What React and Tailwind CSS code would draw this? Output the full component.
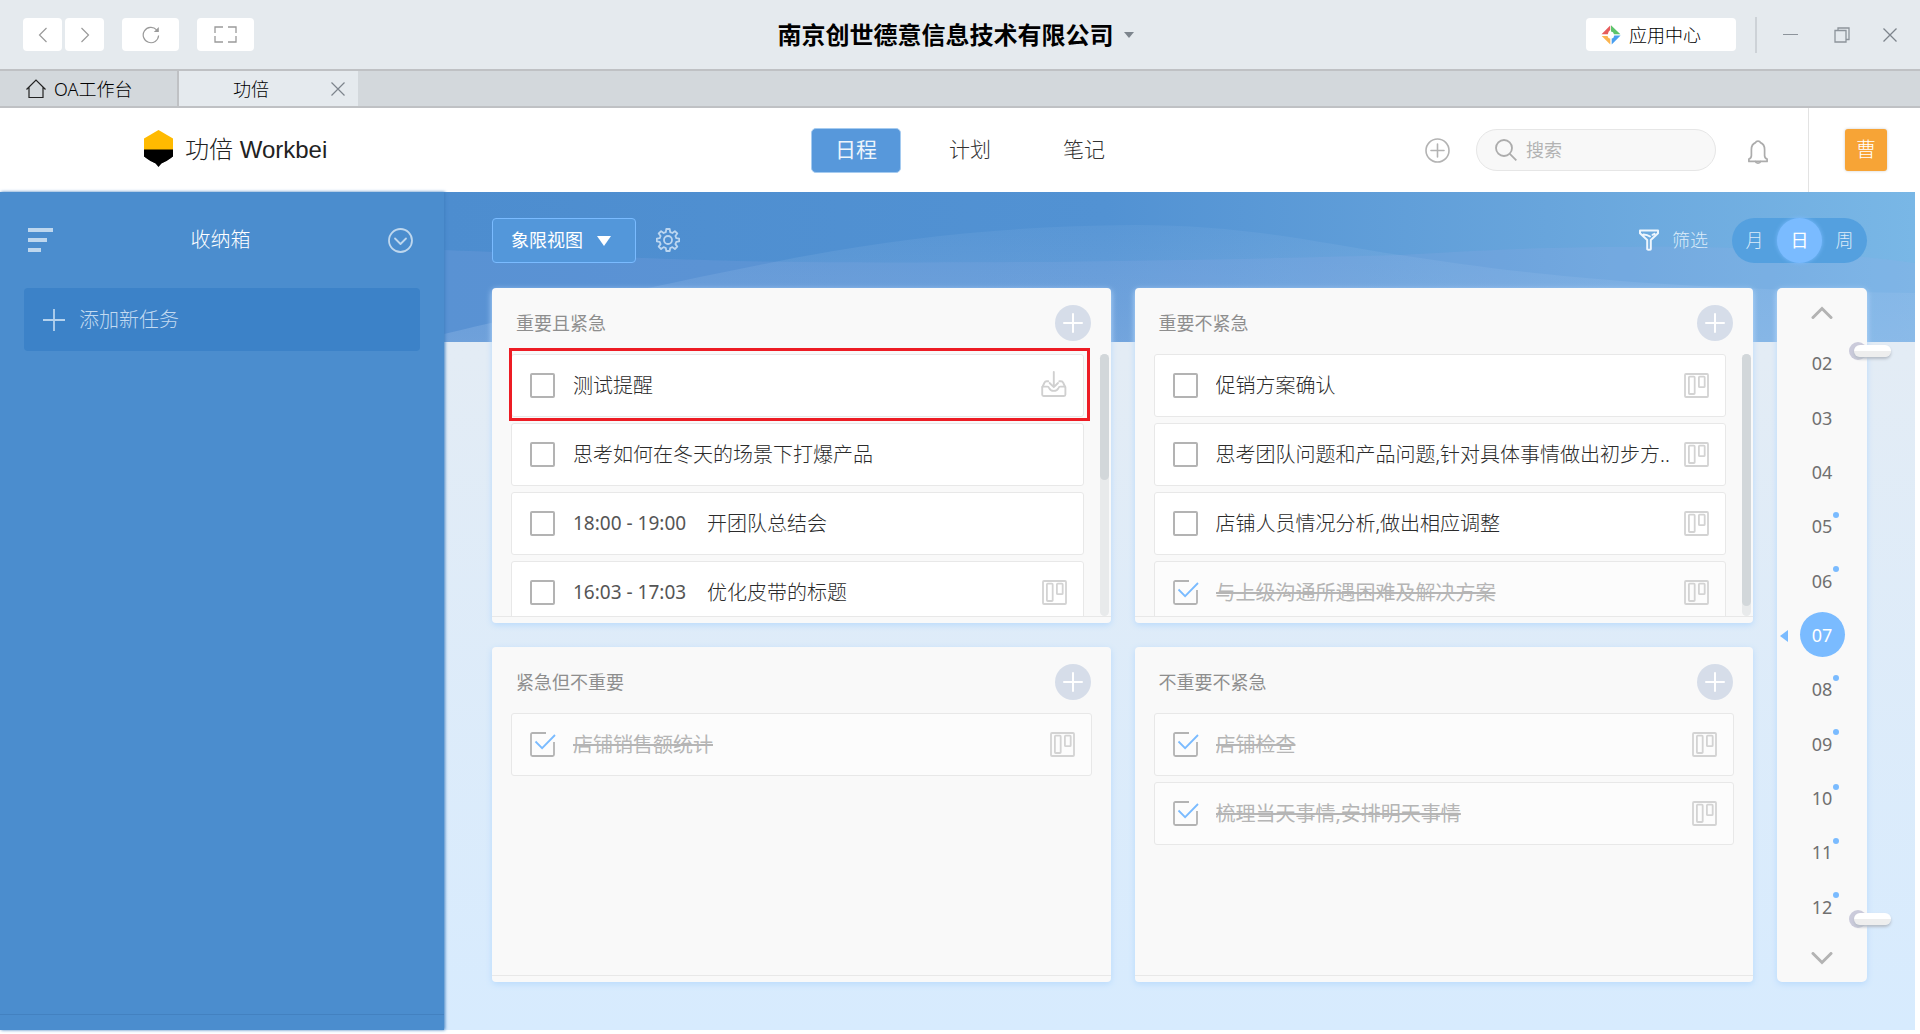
import { useState } from "react";

const quadrants = [
  {
    title: "重要且紧急",
    scroll: "h-[48%]",
    tasks: [
      { text: "测试提醒", icon: "inbox", marked: true },
      { text: "思考如何在冬天的场景下打爆产品" },
      { time: "18:00 - 19:00", text: "开团队总结会" },
      { time: "16:03 - 17:03", text: "优化皮带的标题", icon: "board" },
    ],
  },
  {
    title: "重要不紧急",
    scroll: "h-[96%]",
    tasks: [
      { text: "促销方案确认", icon: "board" },
      { text: "思考团队问题和产品问题,针对具体事情做出初步方..", icon: "board" },
      { text: "店铺人员情况分析,做出相应调整", icon: "board" },
      { text: "与上级沟通所遇困难及解决方案", icon: "board", done: true },
    ],
  },
  {
    title: "紧急但不重要",
    tasks: [{ text: "店铺销售额统计", icon: "board", done: true }],
  },
  {
    title: "不重要不紧急",
    tasks: [
      { text: "店铺检查", icon: "board", done: true },
      { text: "梳理当天事情,安排明天事情", icon: "board", done: true },
    ],
  },
];

const days = [
  { d: "02" },
  { d: "03" },
  { d: "04" },
  { d: "05", dot: true },
  { d: "06", dot: true },
  { d: "07", active: true },
  { d: "08", dot: true },
  { d: "09", dot: true },
  { d: "10", dot: true },
  { d: "11", dot: true },
  { d: "12", dot: true },
];

function BoardIcon() {
  return (
    <svg className="size-[25px] shrink-0" viewBox="0 0 25 25" fill="none" stroke="#d3d3d3" strokeWidth="1.8">
      <rect x="1" y="1" width="23" height="23" rx="1" />
      <rect x="4.9" y="3.6" width="5.8" height="17.4" rx="0.8" />
      <rect x="14.9" y="3.6" width="5.8" height="10.6" rx="0.8" />
    </svg>
  );
}

function InboxIcon() {
  return (
    <svg className="mb-1 size-[26px] shrink-0" viewBox="0 0 26 26" fill="none" stroke="#d0d0d0" strokeWidth="1.9" strokeLinecap="round" strokeLinejoin="round">
      <path d="M12.800 1v15M8.600 12l4.200 4.200L17 12" />
      <path d="M7.300 10.200H5.600C4.400 10.200 3.800 10.800 3.300 12L1.200 16.500v7c0 1 .5 1.500 1.400 1.500h20.400c.9 0 1.400-.5 1.400-1.500v-7L22.300 12c-.5-1.200-1.100-1.800-2.300-1.800h-1.700" />
      <path d="M1.400 15.600h5c1 0 1.400.5 1.800 1.500.8 1.800 2.300 2.800 4.600 2.800s3.800-1 4.600-2.800c.4-1 .8-1.500 1.800-1.500h5" />
    </svg>
  );
}

function Task({ task }) {
  const [done, setDone] = useState(Boolean(task.done));
  return (
    <li
      className={
        "relative flex h-[63px] shrink-0 items-center rounded-[3px] border border-[#e8e8e8] pl-[18px] pr-4 " +
        (done ? "bg-[#fcfcfc]" : "bg-white")
      }
    >
      <label className="flex min-w-0 flex-1 items-center">
        <span className="relative mr-[18px] size-[25px] shrink-0">
          <input
            type="checkbox"
            checked={done}
            onChange={(e) => setDone(e.target.checked)}
            className="peer block size-[25px] appearance-none rounded-[2px] border-2 border-[#b3b3b3] checked:border-transparent"
          />
          <svg className="pointer-events-none absolute inset-0 hidden size-[26px] peer-checked:block" viewBox="0 0 26 26" fill="none" strokeWidth="1.8">
            <path d="M16 1H2.500Q1 1 1 2.500v20Q1 24 2.500 24H22.500Q24 24 24 22.500V10" stroke="#b3b3b3" />
            <path d="M5.500 9.500l6.600 6.700L25 3" stroke="#7abbff" />
          </svg>
        </span>
        {task.time && <span className="w-[134px] shrink-0 text-[19px] font-normal text-[#555555]">{task.time}</span>}
        <span className={"truncate text-xl " + (done ? "font-normal text-[#b5b5b5] line-through decoration-2" : "text-[#2b2b2b]")}>{task.text}</span>
      </label>
      {task.icon === "board" && <BoardIcon />}
      {task.icon === "inbox" && <InboxIcon />}
      {task.marked && <span className="pointer-events-none absolute -bottom-[5px] -left-[3px] -right-[7px] -top-[7px] border-[3px] border-[#ed1c24]" />}
    </li>
  );
}

function Quadrant({ q }) {
  return (
    <section className="flex min-h-0 min-w-0 flex-col rounded-[4px] bg-[#f9f9f9] pb-[6px] shadow-[0_2px_6px_#b9dafc]">
      <header className="flex h-[66px] shrink-0 items-center justify-between pl-6 pr-5 pt-1">
        <h2 className="text-lg font-normal text-[#8e8e8e]">{q.title}</h2>
        <button aria-label={"添加到" + q.title} className="flex size-9 items-center justify-center rounded-full bg-[#d6dde9]">
          <svg className="size-5" viewBox="0 0 20 20" stroke="#ffffff" strokeWidth="2" strokeLinecap="round">
            <path d="M10 1v18M1 10h18" />
          </svg>
        </button>
      </header>
      <div className="flex min-h-0 flex-1 border-b border-[#e8e8e8]">
        <ul className={"flex min-w-0 flex-1 flex-col gap-[6px] pl-[19px] " + (q.scroll ? "pr-4 [clip-path:inset(-8px_0_0_0)]" : "pr-[19px]")}>
          {q.tasks.map((t) => (
            <Task key={t.text} task={t} />
          ))}
        </ul>
        {q.scroll && (
          <div className="mr-[2px] w-[9px] shrink-0 rounded-full bg-[#e8eaeb]">
            <div className={"rounded-full bg-[#d2d7da] " + q.scroll} />
          </div>
        )}
      </div>
    </section>
  );
}

function TitleBar() {
  const chip = "flex h-[33px] items-center justify-center rounded-[4px] bg-white";
  return (
    <header className="flex h-[69px] shrink-0 items-center bg-[#e5eaee] pl-[23px] pr-5">
      <div className="flex flex-1 items-center">
        <button aria-label="后退" className={chip + " w-[39px]"}>
          <svg className="h-4 w-[10px]" viewBox="0 0 10 16" fill="none" stroke="#9a9a9a" strokeWidth="1.200"><path d="M8.500 1L1.500 8l7 7" /></svg>
        </button>
        <button aria-label="前进" className={chip + " ml-[3px] w-[39px]"}>
          <svg className="h-4 w-[10px]" viewBox="0 0 10 16" fill="none" stroke="#9a9a9a" strokeWidth="1.200"><path d="M1.500 1l7 7-7 7" /></svg>
        </button>
        <button aria-label="刷新" className={chip + " ml-[18px] w-[57px]"}>
          <svg className="size-[18px]" viewBox="0 0 18 18" fill="none" stroke="#9a9a9a" strokeWidth="1.200">
            <path d="M16.600 9.500A7.700 7.700 0 1 1 14.600 3.800" />
            <path d="M16.800 1v5h-5z" fill="#9a9a9a" stroke="none" />
          </svg>
        </button>
        <button aria-label="全屏" className={chip + " ml-[18px] w-[57px]"}>
          <svg className="h-[17px] w-[23px]" viewBox="0 0 23 17" fill="none" stroke="#9a9a9a" strokeWidth="1.300">
            <path d="M9 1H1v6M14 1h8v6M1 10v6h8M22 10v6h-8" />
          </svg>
        </button>
      </div>
      <button className="flex items-center gap-[10px] pr-3 text-2xl font-bold text-black">
        南京创世德意信息技术有限公司
        <svg className="h-[6px] w-[10px]" viewBox="0 0 10 6" fill="#7d858d"><path d="M0 0h10L5 6z" /></svg>
      </button>
      <div className="flex flex-1 items-center justify-end">
        <button className={chip + " w-[150px] gap-2 pr-5 text-lg text-black"}>
          <svg className="size-5" viewBox="0 0 20 20">
            <path d="M9.200 0.500L0.500 9.200h6.300Q7.200 6.500 9.200 5z" fill="#e65c5c" />
            <path d="M10 0.300l9.400 8.900h-6.400Q12.500 6.500 10 6.500z" fill="#5cc46c" />
            <path d="M19.600 10.500l-8.900 9v-6q2.300-.5 2.600-3z" fill="#4a9ff0" />
            <path d="M0.700 11h5.800q.6 2.500 2.800 2.700v5.900z" fill="#fbb450" />
          </svg>
          应用中心
        </button>
        <span className="ml-[19px] h-9 w-[2px] bg-[#cdd2d7]" />
        <button aria-label="最小化" className="ml-[23px] flex size-5 items-center justify-center">
          <span className="h-px w-[15px] bg-[#8d949b]" />
        </button>
        <button aria-label="还原" className="ml-8 flex size-5 items-center justify-center">
          <svg className="size-4" viewBox="0 0 16 16" fill="none" stroke="#8d949b" strokeWidth="1.300">
            <path d="M1 3.500h11v11.500H1zM4 3.500V1h11v11.500h-3" />
          </svg>
        </button>
        <button aria-label="关闭" className="ml-7 flex size-5 items-center justify-center">
          <svg className="size-[14px]" viewBox="0 0 14 14" fill="none" stroke="#7d848c" strokeWidth="1.300"><path d="M.500.500l13 13M13.500.500l-13 13" /></svg>
        </button>
      </div>
    </header>
  );
}

function Tabs() {
  return (
    <nav className="flex h-[39px] shrink-0 border-y-2 border-[#bfc1c4] bg-[#d3d8dc] text-lg text-black">
      <button className="flex w-[179px] items-center border-r-2 border-[#bfc1c4] pl-[26px]">
        <svg className="mr-2 size-5" viewBox="0 0 20 20" fill="none" stroke="#222222" strokeWidth="1.200">
          <path d="M.500 10.500L10 1l9.500 9.500M3 8.500V18.500h14V8.500" />
        </svg>
        OA工作台
      </button>
      <div className="flex w-[179px] items-center bg-[#e5eaee]">
        <button className="flex-1 pr-2 text-center">功倍</button>
        <button aria-label="关闭标签" className="mr-[13px]">
          <svg className="size-[14px]" viewBox="0 0 14 14" fill="none" stroke="#7d848c" strokeWidth="1.200"><path d="M.500.500l13 13M13.500.500l-13 13" /></svg>
        </button>
      </div>
    </nav>
  );
}

function AppHeader() {
  return (
    <header className="flex h-[84px] shrink-0 items-center bg-white">
      <div className="flex w-[42.35%] items-center pl-36">
        <svg className="mb-1 h-[37px] w-[29px]" viewBox="0 0 29 37">
          <path d="M14.500 0L29 8.500V20H0V8.500z" fill="#ffba00" />
          <path d="M0 19.500h29v7L17.500 33.500 14.500 37l-3-3.500L0 26.500z" fill="#000000" />
          <path d="M0 26q4 5 14.500 8Q25 31 29 26z" fill="#000000" />
        </svg>
        <span className="ml-3 font-['Liberation_Sans','Noto_Sans_CJK_SC',sans-serif] text-2xl font-light text-[#222222]">功倍 Workbei</span>
      </div>
      <nav className="flex gap-6 text-[21px] text-[#333333]">
        <button className="h-[45px] w-[90px] rounded-[5px] border border-[#a5cbf0] bg-[#5798db] font-normal text-[#eef5fc]">日程</button>
        <button className="h-[45px] w-[90px]">计划</button>
        <button className="h-[45px] w-[90px]">笔记</button>
      </nav>
      <div className="ml-auto flex h-full items-center">
        <button aria-label="新建">
          <svg className="size-[25px]" viewBox="0 0 25 25" fill="none" stroke="#b3b3b3" strokeWidth="1.600">
            <circle cx="12.500" cy="12.500" r="11.500" />
            <path d="M12.500 6v13M6 12.500h13" strokeLinecap="round" />
          </svg>
        </button>
        <label className="ml-[26px] flex h-[42px] w-[240px] items-center rounded-full border border-[#e6e6e6] bg-[#f8f8f8] pl-[18px]">
          <svg className="size-[22px] shrink-0" viewBox="0 0 22 22" fill="none" stroke="#acacac" strokeWidth="1.800">
            <circle cx="9" cy="9" r="8" />
            <path d="M14.800 14.800l6.500 6.500" />
          </svg>
          <input aria-label="搜索" placeholder="搜索" className="ml-[9px] min-w-0 flex-1 bg-transparent text-lg font-normal outline-none placeholder:text-[#b3b3b3]" />
        </label>
        <button aria-label="通知" className="ml-8 mt-1">
          <svg className="h-6 w-5" viewBox="0 0 20 24" fill="none" stroke="#acacac" strokeWidth="1.700" strokeLinejoin="round" strokeLinecap="round">
            <path d="M7.500 2.600a2.600 2 0 0 1 5 0C15.500 3.800 16.600 6.400 16.600 9.400v6c0 1.800 1 3 2.500 3.600v2.400H.900V19c1.500-.6 2.500-1.800 2.500-3.600v-6c0-3 1.100-5.600 4.100-6.800z" />
            <path d="M7.500 21.600c.5 2 4.500 2 5 0" />
          </svg>
        </button>
        <div className="ml-10 flex h-full items-center border-l border-[#e3e3e3] pl-9 pr-7">
          <button className="flex size-[42px] items-center justify-center rounded-[3px] bg-[#f7a436] text-xl text-white shadow-[0_0_3px_#cccccc]">曹</button>
        </div>
      </div>
    </header>
  );
}

function Sidebar() {
  return (
    <aside className="relative z-10 flex w-[444px] shrink-0 flex-col bg-[#4b8dce] px-6 shadow-[1px_0_3px_#3f7fc0]">
      <div className="flex h-24 shrink-0 items-center justify-between pl-1 pr-[7px]">
        <button aria-label="菜单" className="flex flex-col gap-[6px]">
          <span className="h-1 w-[25px] bg-[#bed7ee]" />
          <span className="h-1 w-[19px] bg-[#bed7ee]" />
          <span className="h-1 w-[13px] bg-[#bed7ee]" />
        </button>
        <h1 className="text-xl text-white">收纳箱</h1>
        <button aria-label="展开">
          <svg className="size-[25px]" viewBox="0 0 25 25" fill="none" stroke="#bed7ee" strokeWidth="1.800" strokeLinecap="round" strokeLinejoin="round">
            <circle cx="12.500" cy="12.500" r="11.500" />
            <path d="M7 10.500l5.500 5.500 5.500-5.500" />
          </svg>
        </button>
      </div>
      <button className="flex h-[63px] shrink-0 items-center gap-[14px] rounded-[4px] bg-[#3c82c8] pl-[19px] text-xl text-[#c2daf1]">
        <svg className="size-[22px]" viewBox="0 0 22 22" stroke="#b5d2ee" strokeWidth="1.800"><path d="M11 0v22M0 11h22" /></svg>
        添加新任务
      </button>
      <div className="-mx-6 mt-auto h-4 border-t border-[#4381c0]" />
    </aside>
  );
}

function Banner() {
  return (
    <svg className="absolute inset-x-0 top-0 h-[150px] w-full" viewBox="0 0 1470 150" preserveAspectRatio="none">
      <defs>
        <linearGradient id="sky" x1="0" y1="0" x2="1" y2="0">
          <stop offset="0" stopColor="#4d8dcf" />
          <stop offset="0.450" stopColor="#5292d3" />
          <stop offset="0.750" stopColor="#68a5dc" />
          <stop offset="1" stopColor="#79b7e6" />
        </linearGradient>
        <linearGradient id="near" x1="0" y1="0" x2="0" y2="1">
          <stop offset="0" stopColor="#9fc4ee" stopOpacity="0.100" />
          <stop offset="1" stopColor="#a8c8ee" stopOpacity="0.280" />
        </linearGradient>
      </defs>
      <rect width="1470" height="150" fill="url(#sky)" />
      <path d="M0 58C150 64 250 69 360 70C600 72 800 67 955 63C1060 57 1110 55 1180 55C1290 54 1370 58 1470 71V150H0z" fill="#9fb0ea" fillOpacity="0.150" />
      <path d="M0 142C100 118 220 92 330 70C450 46 560 34 690 33C800 33 870 50 955 63C1080 82 1200 97 1470 101V150H0z" fill="url(#near)" />
    </svg>
  );
}

function Toolbar() {
  return (
    <div className="flex h-24 shrink-0 items-center">
      <div className="relative">
        <select aria-label="视图" className="block h-[45px] w-[144px] appearance-none rounded-[4px] border border-[#7abbff] bg-[#5397da] pl-[18px] text-lg font-normal text-white">
          <option>象限视图</option>
        </select>
        <svg className="pointer-events-none absolute right-[25px] top-[18px] h-[10px] w-[14px]" viewBox="0 0 14 10" fill="#ffffff"><path d="M0 0h14L7 10z" /></svg>
      </div>
      <button aria-label="设置" className="ml-5">
        <svg className="size-6" viewBox="0 0 24 24" fill="none" stroke="#bcd6f0" strokeWidth="1.800" strokeLinejoin="round">
          <circle cx="12" cy="12" r="4" />
          <path d="M10.300 1h3.400l.5 3.100 2.200.9 2.500-1.900 2.400 2.400-1.900 2.500.9 2.200 2.900.4v2.800l-2.900.5-.9 2.200 1.900 2.500-2.400 2.400-2.500-1.900-2.200.9-.5 3h-3.400l-.5-3-2.200-.9-2.500 1.900-2.400-2.400 1.900-2.500-.9-2.200L.8 13.400v-2.800l2.900-.4.9-2.200-1.900-2.500 2.400-2.400L7.600 5l2.200-.9z" />
        </svg>
      </button>
      <button className="ml-auto flex items-center gap-[13px] text-lg text-[#dcebf9]">
        <svg className="h-[22px] w-5" viewBox="0 0 20 22" fill="none" stroke="#eef6fd" strokeWidth="2" strokeLinejoin="round" strokeLinecap="round">
          <path d="M1 1.500h18v2.800L11.800 11v9.200c0 .8-3.600.8-3.600 0V11L1 4.300zM4.500 5.500q4 .2 6.500 2M13.500 5.800l2-1" />
        </svg>
        筛选
      </button>
      <div className="ml-6 flex rounded-full bg-[#54a0df] text-lg text-[#dcebf9]">
        <button className="size-[45px]">月</button>
        <button className="size-[45px] rounded-full bg-[#7abbff] font-normal text-white shadow-[0_0_4px_#7abbff]">日</button>
        <button className="size-[45px]">周</button>
      </div>
    </div>
  );
}

function Clip({ place }) {
  return (
    <span className={"absolute -right-6 h-[18px] w-[42px] " + place}>
      <span className="absolute left-0 top-0 size-[18px] rounded-full bg-[#cbcbdb]" />
      <span className="absolute left-[5px] top-[3px] h-3 w-[37px] rounded-full bg-linear-to-b from-white from-50% to-[#eeeeee] to-50% shadow-[0_2px_3px_#b5bcc6]" />
    </span>
  );
}

function DayStrip() {
  return (
    <aside className="relative flex w-[90px] shrink-0 flex-col items-center rounded-[5px] bg-[#f9f9f9] shadow-[0_2px_6px_#b9dafc]">
      <button aria-label="之前" className="flex h-12 shrink-0 items-center">
        <svg className="h-[13px] w-[22px]" viewBox="0 0 22 13" fill="none" stroke="#b3b3b3" strokeWidth="3" strokeLinecap="round"><path d="M2 11.500l9-9 9 9" /></svg>
      </button>
      <ol className="flex min-h-0 w-full flex-1 flex-col">
        {days.map(({ d, dot, active }) => (
          <li key={d} className="relative flex min-h-0 flex-1 items-center justify-center">
            <button className={"relative flex size-[45px] items-center justify-center rounded-full text-lg font-normal " + (active ? "bg-[#7abbff] text-white" : "text-[#707070]")}>
              {d}
              {dot && <span className="absolute right-[6px] top-2 size-[6px] rounded-full bg-[#7abbff]" />}
            </button>
            {active && (
              <svg className="absolute left-[3px] top-[22px] h-3 w-2" viewBox="0 0 8 12" fill="#7abbff"><path d="M8 0v12L0 6z" /></svg>
            )}
          </li>
        ))}
      </ol>
      <button aria-label="之后" className="flex h-12 shrink-0 items-center">
        <svg className="h-[13px] w-[22px]" viewBox="0 0 22 13" fill="none" stroke="#b3b3b3" strokeWidth="3" strokeLinecap="round"><path d="M2 1.500l9 9 9-9" /></svg>
      </button>
      <Clip place="top-[54px]" />
      <Clip place="bottom-[54px]" />
    </aside>
  );
}

export default function App() {
  return (
    <div className="flex h-screen flex-col overflow-hidden bg-white font-['Noto_Sans','Noto_Sans_CJK_SC',sans-serif] font-light">
      <TitleBar />
      <Tabs />
      <div className="mb-1 mr-[5px] flex min-h-0 flex-1 flex-col">
        <AppHeader />
        <div className="flex min-h-0 flex-1">
          <Sidebar />
          <main className="relative min-w-0 flex-1 bg-linear-to-b from-[#e3ecf5] from-20% to-[#d7ebfe]">
            <Banner />
            <div className="relative flex h-full flex-col px-12 pb-12">
              <Toolbar />
              <div className="flex min-h-0 flex-1 gap-6">
                <div className="grid min-h-0 min-w-0 flex-1 grid-cols-2 grid-rows-2 gap-6">
                  {quadrants.map((q) => (
                    <Quadrant key={q.title} q={q} />
                  ))}
                </div>
                <DayStrip />
              </div>
            </div>
          </main>
        </div>
      </div>
    </div>
  );
}
